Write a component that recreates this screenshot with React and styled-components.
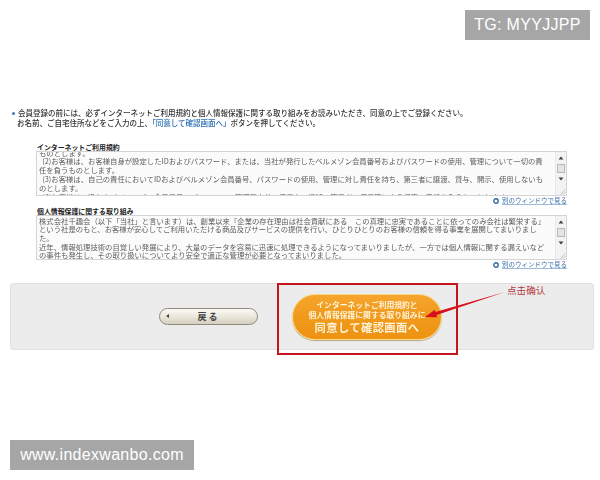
import React from "react";
import styled, { createGlobalStyle } from "styled-components";

const Global = createGlobalStyle`
  html, body { margin: 0; padding: 0; background: #fff; }
  body { font-family: "Noto Sans CJK JP", "Liberation Sans", sans-serif; }
`;

const Page = styled.div`
  position: relative;
  width: 600px;
  height: 480px;
  overflow: hidden;
  padding-top: 108px;
  box-sizing: border-box;
`;

const Intro = styled.div`
  margin: 0 0 0 12px;
  font-size: 7.5px;
  line-height: 10px;
  font-weight: 500;
  color: #333;
  white-space: nowrap;
  filter: blur(0.3px);
`;

const Bullet = styled.span`
  display: inline-block;
  width: 3px;
  height: 3px;
  border-radius: 50%;
  background: #3b78b5;
  margin: 0 3px 1px 0;
`;

const IntroLine = styled.div`
  padding-left: ${(p) => (p.$indent ? "5px" : "0")};
`;

const Hl = styled.span`
  color: #2a6db0;
`;

const Sections = styled.div`
  margin: 15px 33px 0 36px;
`;

const Section = styled.section`
  margin-bottom: 2px;
`;

const Title = styled.h3`
  margin: 0 0 0 1px;
  font-size: 6.9px;
  line-height: 8px;
  font-weight: 700;
  color: #222;
  white-space: nowrap;
`;

const TextBox = styled.div`
  display: flex;
  height: 45px;
  box-sizing: border-box;
  border: 1px solid #d4d4d4;
  background: #fbfbfb;
  overflow: hidden;
`;

const BoxText = styled.div`
  flex: 1;
  min-width: 0;
  overflow: hidden;
  padding-left: 2px;
  font-size: 7.35px;
  line-height: ${(p) => p.$line}px;
  color: #5c5c5c;
  white-space: pre;
  filter: blur(0.3px);
`;

const Clipped = styled.div`
  margin-top: ${(p) => p.$offset}px;
`;

const Scrollbar = styled.div`
  flex: none;
  width: 10px;
  background: #f3f3f3;
  border-left: 1px solid #e8e8e8;
  display: flex;
  flex-direction: column;
  align-items: center;
  padding-top: 4px;
  gap: 4px;
`;

const Thumb = styled.div`
  width: 6px;
  height: 7px;
  border: 1px solid #b8b8b8;
  background: #e4e4e4;
`;

const Grip = styled.svg`
  margin-top: auto;
  align-self: flex-end;
`;

const LinkRow = styled.div`
  display: flex;
  justify-content: flex-end;
  align-items: center;
  gap: 3px;
  height: 9px;
  font-size: 6.5px;
  line-height: 8px;
  color: #3f6fa8;
  filter: blur(0.2px);
`;

const LinkText = styled.span`
  border-bottom: 1px solid #9db8d8;
`;

const Panel = styled.div`
  display: flex;
  align-items: center;
  gap: 34px;
  box-sizing: border-box;
  width: 584px;
  height: 67px;
  margin: 14px 0 0 10px;
  padding: 0 0 0 148px;
  background: #ececec;
  border: 1px solid #e0e0e0;
  border-radius: 3px;
`;

const BackButton = styled.div`
  position: relative;
  width: 99px;
  height: 17px;
  box-sizing: border-box;
  display: flex;
  align-items: center;
  justify-content: center;
  border: 1px solid #8f8a7c;
  border-radius: 9px;
  background: linear-gradient(#fbfaf6, #e9e5d8 55%, #d4cfbe);
  font-size: 9px;
  font-weight: 700;
  letter-spacing: 2px;
  color: #444;
`;

const BackArrow = styled.span`
  position: absolute;
  left: 6px;
  top: 5px;
  width: 0;
  height: 0;
  border: 2px solid transparent;
  border-right: 3px solid #444;
  border-left: 0;
`;

const OrangeButton = styled.div`
  width: 150px;
  height: 46px;
  box-sizing: border-box;
  display: flex;
  flex-direction: column;
  align-items: center;
  justify-content: center;
  border: 1px solid #fbd98a;
  border-radius: 23px;
  background: linear-gradient(#f6a52c, #f09a1c 50%, #ee9212);
  box-shadow: 0 1px 1px #b9a77e;
  color: #fff3d9;
  white-space: nowrap;
  filter: blur(0.2px);
`;

const OrangeSmall = styled.div`
  font-size: 7.8px;
  line-height: 10px;
  font-weight: 700;
`;

const OrangeBig = styled.div`
  font-size: 11.3px;
  line-height: 14px;
  font-weight: 700;
  letter-spacing: 0.4px;
`;

const Highlight = styled.div`
  position: absolute;
  left: 277px;
  top: 283px;
  width: 181px;
  height: 72px;
  box-sizing: border-box;
  border: 2px solid #c4161c;
`;

const Arrow = styled.svg`
  position: absolute;
  left: 400px;
  top: 280px;
`;

const Note = styled.div`
  position: absolute;
  left: 507px;
  top: 284px;
  font-family: "Noto Sans CJK SC", sans-serif;
  font-size: 9.6px;
  line-height: 12px;
  color: #b5383c;
`;

const Watermark = styled.div`
  position: absolute;
  left: ${(p) => p.$x}px;
  top: ${(p) => p.$y}px;
  width: ${(p) => p.$w}px;
  height: 30px;
  display: flex;
  align-items: center;
  justify-content: center;
  background: #a6a6a6;
  color: #fff;
  font-family: "Liberation Sans", sans-serif;
  font-size: 16px;
  letter-spacing: 0.3px;
`;

const LinkIcon = () => (
  <svg width="6" height="6" viewBox="0 0 6 6">
    <circle cx="3" cy="3" r="2.2" fill="none" stroke="#2f6aa8" strokeWidth="1.4" />
  </svg>
);

const box1 = [
  "ものとします。",
  "  (2)お客様は、お客様自身が設定したIDおよびパスワード、または、当社が発行したベルメゾン会員番号およびパスワードの使用、管理について一切の責",
  "任を負うものとします。",
  "  (3)お客様は、自己の責任においてIDおよびベルメゾン会員番号、パスワードの使用、管理に対し責任を持ち、第三者に譲渡、貸与、開示、使用しないも",
  "のとします。",
  "  (4)お客様は、IDおよびベルメゾン会員番号、パスワードの管理不十分、使用上の過誤、第三者の使用等による損害の責任を負うものとします。",
];

const box2 = [
  "株式会社千趣会（以下「当社」と言います）は、創業以来『企業の存在理由は社会貢献にある　この真理に忠実であることに依ってのみ会社は繁栄する』",
  "という社是のもと、お客様が安心してご利用いただける商品及びサービスの提供を行い、ひとりひとりのお客様の信頼を得る事業を展開してまいりまし",
  "た。",
  "近年、情報処理技術の目覚しい発展により、大量のデータを容易に迅速に処理できるようになってまいりましたが、一方では個人情報に関する漏えいなど",
  "の事件も発生し、その取り扱いについてより安全で適正な管理が必要となってまいりました。",
];

const ScrollArrow = ({ up }) => (
  <svg width="6" height="4" viewBox="0 0 6 4">
    <path d={up ? "M3 0.5 L5.5 3.5 H0.5 Z" : "M3 3.5 L5.5 0.5 H0.5 Z"} fill="#444" />
  </svg>
);

const Bar = () => (
  <Scrollbar>
    <ScrollArrow up />
    <Thumb />
    <ScrollArrow />
    <Grip width="6" height="6" viewBox="0 0 6 6">
      <path d="M0.5 5.5 L5.5 0.5 M3 5.5 L5.5 3" stroke="#aaa" strokeWidth="0.7" />
    </Grip>
  </Scrollbar>
);

const More = () => (
  <LinkRow>
    <LinkIcon />
    <LinkText>別のウィンドウで見る</LinkText>
  </LinkRow>
);

export default function App() {
  return (
    <>
      <Global />
      <Page>
        <Intro>
          <IntroLine>
            <Bullet />
            会員登録の前には、必ずインターネットご利用規約と個人情報保護に関する取り組みをお読みいただき、同意の上でご登録ください。
          </IntroLine>
          <IntroLine $indent>
            お名前、ご自宅住所などをご入力の上、<Hl>「同意して確認画面へ」</Hl>ボタンを押してください。
          </IntroLine>
        </Intro>

        <Sections>
          <Section>
            <Title>インターネットご利用規約</Title>
            <TextBox>
              <BoxText $line={8.9}>
                <Clipped $offset={-3.5}>{box1.join("\n")}</Clipped>
              </BoxText>
              <Bar />
            </TextBox>
            <More />
          </Section>
          <Section>
            <Title>個人情報保護に関する取り組み</Title>
            <TextBox>
              <BoxText $line={8.7}>
                <Clipped $offset={0.6}>{box2.join("\n")}</Clipped>
              </BoxText>
              <Bar />
            </TextBox>
            <More />
          </Section>
        </Sections>

        <Panel>
          <BackButton>
            <BackArrow />
            戻る
          </BackButton>
          <OrangeButton>
            <OrangeSmall>インターネットご利用規約と</OrangeSmall>
            <OrangeSmall>個人情報保護に関する取り組みに</OrangeSmall>
            <OrangeBig>同意して確認画面へ</OrangeBig>
          </OrangeButton>
        </Panel>

        <Highlight />
        <Arrow width="110" height="45" viewBox="0 0 110 45">
          <path d="M25 37 L34.8 29.7 L35.5 32 L105 12 L36.5 35 L37.2 37.3 Z" fill="#d8101c" />
        </Arrow>
        <Note>点击确认</Note>

        <Watermark $x={465} $y={10} $w={125}>TG: MYYJJPP</Watermark>
        <Watermark $x={10} $y={440} $w={184}>www.indexwanbo.com</Watermark>
      </Page>
    </>
  );
}
